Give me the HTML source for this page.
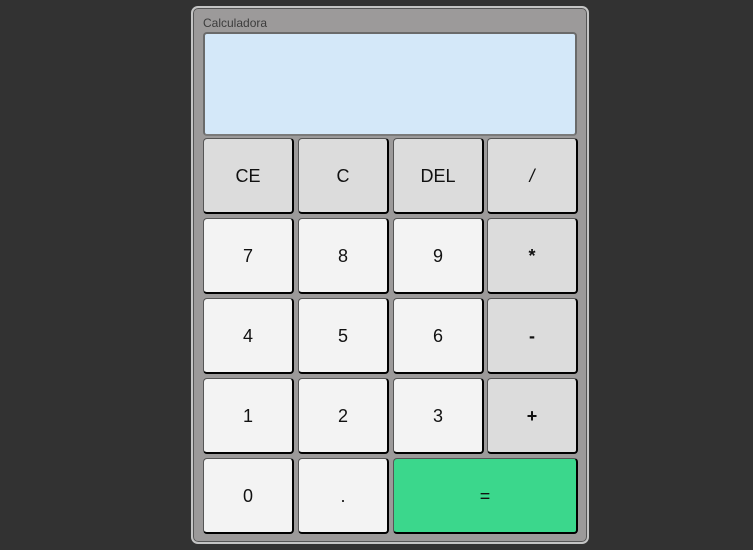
<!DOCTYPE html><html><head><style>
body{margin:0;width:753px;height:550px;background:#323232;font-family:"Liberation Sans",sans-serif;position:relative;overflow:hidden}
.c{position:absolute;left:191px;top:6px;width:394px;height:534px;background:#9c9a9a;border:2px solid #c4c4c4;border-radius:7px;box-shadow:0 0 0 1px #555 inset}
.t{position:absolute;left:203px;top:16px;font-size:12px;color:#3c3c3c}
.d{position:absolute;left:203px;top:32px;width:370px;height:100px;background:#d4e8f9;border:2px solid #6a6a6a;border-bottom-color:#7a7a7a;border-radius:4px}
.b{position:absolute;width:88px;height:72px;border:1px solid #555;border-right:2px solid #000;border-bottom:2px solid #000;border-radius:4px;background:#f3f3f3;display:flex;align-items:center;justify-content:center;font-size:18px;color:#111;padding-top:1px;box-sizing:content-box}
.g{background:#dcdcdc}.k{font-weight:bold}
</style></head><body>
<div class="c"></div><div class="t">Calculadora</div><div class="d"></div>
<div class="b g" style="left:203px;top:138px">CE</div>
<div class="b g" style="left:298px;top:138px">C</div>
<div class="b g" style="left:393px;top:138px">DEL</div>
<div class="b g" style="left:487px;top:138px;font-style:italic">/</div>
<div class="b" style="left:203px;top:218px">7</div>
<div class="b" style="left:298px;top:218px">8</div>
<div class="b" style="left:393px;top:218px">9</div>
<div class="b g k" style="left:487px;top:218px">*</div>
<div class="b" style="left:203px;top:298px">4</div>
<div class="b" style="left:298px;top:298px">5</div>
<div class="b" style="left:393px;top:298px">6</div>
<div class="b g k" style="left:487px;top:298px">-</div>
<div class="b" style="left:203px;top:378px">1</div>
<div class="b" style="left:298px;top:378px">2</div>
<div class="b" style="left:393px;top:378px">3</div>
<div class="b g k" style="left:487px;top:378px">+</div>
<div class="b" style="left:203px;top:458px">0</div>
<div class="b" style="left:298px;top:458px">.</div>
<div class="b" style="left:393px;top:458px;width:182px;background:#3bd78c">=</div>
</body></html>
